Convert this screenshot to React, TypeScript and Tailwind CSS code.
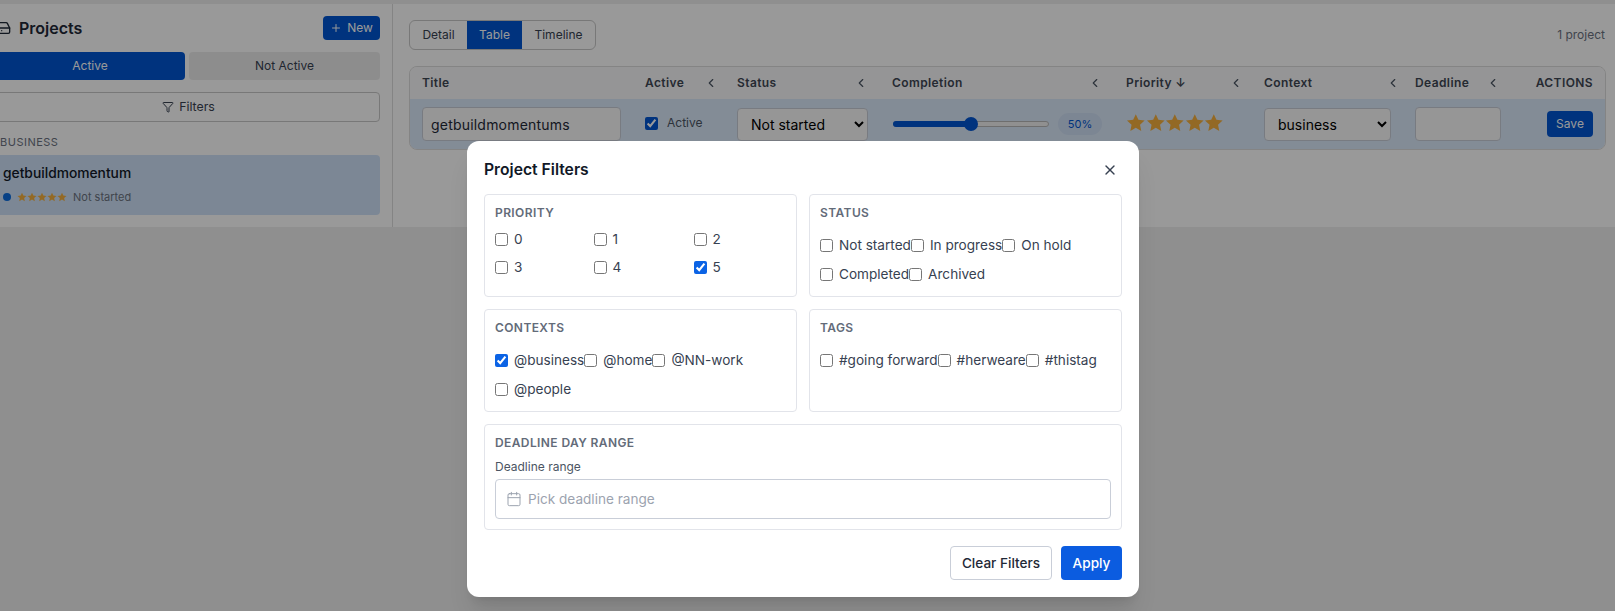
import { Calendar, ChevronLeft, Filter, HardDrive, Plus, X } from "lucide-react";

const COLS = "grid grid-cols-[224px_91px_155px_234px_138px_152px_114px_89px]";

function HeadCell({ label, chevronClass }: { label: string; chevronClass?: string }) {
  return (
    <div className="flex items-center pl-[12px] text-[12px] font-semibold tracking-[0.4px] text-[#3f4754]">
      <span>{label}</span>
      {chevronClass && <ChevronLeft className={`size-[14px] text-[#4b5563] ${chevronClass}`} />}
    </div>
  );
}

function Stars({ size }: { size: string }) {
  return (
    <div className="flex items-center">
      {[0, 1, 2, 3, 4].map((i) => (
        <svg key={i} viewBox="0 0 24 24" className={`${size} fill-[#f5b03e]`}>
          <polygon points="12,1.5 15.2,8.4 22.8,9.3 17.2,14.4 18.7,21.9 12,18.2 5.3,21.9 6.8,14.4 1.2,9.3 8.8,8.4" />
        </svg>
      ))}
    </div>
  );
}

function Check({ label, checked }: { label: string; checked?: boolean }) {
  return (
    <label className="flex h-5 items-center text-[13.6px] text-[#374151]">
      <input type="checkbox" defaultChecked={checked} className="mr-[6px] size-[13px] accent-[#0b63e5]" />
      {label}
    </label>
  );
}

function Section({ title, children, className }: { title: string; children?: React.ReactNode; className?: string }) {
  return (
    <div className={`rounded border border-[#e2e4ea] px-[10px] pt-[10px] ${className ?? ""}`}>
      <div className="text-[12px] font-semibold leading-4 tracking-[0.4px] text-[#636b79]">{title}</div>
      {children}
    </div>
  );
}

function FilterModal() {
  return (
    <div className="absolute left-[467px] top-[141px] w-[672px] rounded-xl bg-white px-[17px] pb-[17px] shadow-xl">
      <div className="flex h-[53px] items-center justify-between pt-[4px]">
        <h2 className="text-[15.7px] font-semibold text-[#111827]">Project Filters</h2>
        <X className="mr-[4px] size-[16px] text-[#374151]" />
      </div>
      <div className="grid grid-cols-2 gap-3">
        <Section title="PRIORITY" className="h-[103px]">
          <div className="mt-[8px] grid grid-cols-[98.5px_100px_1fr] gap-y-2">
            {[0, 1, 2, 3, 4, 5].map((n) => (
              <Check key={n} label={String(n)} checked={n === 5} />
            ))}
          </div>
        </Section>
        <Section title="STATUS" className="h-[103px]">
          <div className="mt-[14px] flex flex-wrap gap-y-[9px]">
            {["Not started", "In progress", "On hold", "Completed", "Archived"].map((s) => (
              <Check key={s} label={s} />
            ))}
          </div>
        </Section>
        <Section title="CONTEXTS" className="h-[103px]">
          <div className="mt-[14px] flex flex-wrap gap-y-[9px]">
            <Check label="@business" checked />
            <Check label="@home" />
            <Check label="@NN-work" />
            <Check label="@people" />
          </div>
        </Section>
        <Section title="TAGS" className="h-[103px]">
          <div className="mt-[14px] flex flex-wrap gap-y-[9px]">
            <Check label="#going forward" />
            <Check label="#herweare" />
            <Check label="#thistag" />
          </div>
        </Section>
      </div>
      <Section title="DEADLINE DAY RANGE" className="mt-3 h-[106px]">
        <div className="mt-[8px] text-[12px] leading-4 text-[#4b5563]">Deadline range</div>
        <div className="mt-[4px] flex h-[40px] items-center gap-[6px] rounded border border-[#c9ced8] px-[10px] text-[13.6px] text-[#9ca3af]">
          <Calendar className="size-[16px]" strokeWidth={1.5} />
          <span>Pick deadline range</span>
        </div>
      </Section>
      <div className="mt-[16px] flex justify-end gap-[9px]">
        <button className="h-[34px] w-[102px] rounded border border-[#c9ced8] bg-white text-[13.6px] font-medium text-[#1f2937]">
          Clear Filters
        </button>
        <button className="h-[34px] w-[61px] rounded bg-[#0b5ce0] text-[13.6px] font-medium text-white">Apply</button>
      </div>
    </div>
  );
}

function Sidebar() {
  return (
    <aside className="w-[393px] shrink-0 border-r border-[#dcdcdc] pl-0 pr-[12px] pt-[12px]">
      <div className="-ml-[5px]">
        <div className="flex h-[24px] items-center justify-between">
          <div className="flex items-center gap-[8px]">
            <HardDrive className="size-[16px] text-[#1f2937]" />
            <span className="text-[16px] font-semibold text-[#1f2937]">Projects</span>
          </div>
          <button className="flex h-[24px] w-[57px] items-center justify-center gap-[5px] rounded bg-[#0056d2] text-[12px] text-white">
            <Plus className="size-[12px]" />
            New
          </button>
        </div>
        <div className="mt-[12px] flex gap-[4px]">
          <div className="flex h-[28px] w-[190px] items-center justify-center rounded bg-[#0056d2] text-[12px] text-white">
            Active
          </div>
          <div className="flex h-[28px] flex-1 items-center justify-center rounded bg-[#ececec] text-[12px] text-[#374151]">
            Not Active
          </div>
        </div>
        <button className="mt-[12px] flex h-[30px] w-full items-center justify-center gap-[5px] rounded border border-[#c9c9c9] pl-[2px] text-[12.3px] text-[#374151]">
          <Filter className="size-[12px]" />
          Filters
        </button>
        <div className="mt-[12px] pl-[5px] text-[11px] leading-4 tracking-[0.5px] text-[#6b7280]">BUSINESS</div>
        <div className="mt-[5px] h-[60px] rounded bg-[#cfe2f8] pl-[8px] pt-[8px]">
          <div className="text-[13.8px] font-medium leading-5 text-[#111827]">getbuildmomentum</div>
          <div className="mt-[6px] flex items-center gap-[6px] text-[11px] leading-4 text-[#6b7280]">
            <span className="size-[8px] rounded-full bg-[#0a6ce0]" />
            <Stars size="size-[10px]" />
            <span>Not started</span>
          </div>
        </div>
      </div>
    </aside>
  );
}

function TableView() {
  return (
    <main className="min-w-0 flex-1 pl-[16px] pr-[10px] pt-[16px]">
      <div className="flex items-center justify-between">
        <div className="flex h-[30px] w-[187px] overflow-hidden rounded-md border border-[#c9c9c9] text-[12px] text-[#374151]">
          <div className="flex w-[57px] items-center justify-center">Detail</div>
          <div className="flex w-[55px] items-center justify-center bg-[#0056d2] text-white">Table</div>
          <div className="flex flex-1 items-center justify-center">Timeline</div>
        </div>
        <span className="text-[12px] text-[#6b7280]">1 project</span>
      </div>
      <div className="mt-[16px] -mr-px overflow-hidden rounded-lg border border-[#dcdcdc]">
        <div className={`${COLS} h-[32px] bg-[#f8f9fa]`}>
          <HeadCell label="Title" />
          <div className="-ml-px flex">
            <HeadCell label="Active" chevronClass="ml-[20px]" />
          </div>
          <HeadCell label="Status" chevronClass="ml-[77px]" />
          <HeadCell label="Completion" chevronClass="ml-[125px]" />
          <HeadCell label="Priority ↓" chevronClass="ml-[43px]" />
          <HeadCell label="Context" chevronClass="ml-[73px]" />
          <div className="-ml-px flex">
            <HeadCell label="Deadline" chevronClass="ml-[17px]" />
          </div>
          <div className="flex items-center justify-end pr-[14px] text-[12px] font-semibold tracking-[0.4px] text-[#3f4754]">
            ACTIONS
          </div>
        </div>
        <div className={`${COLS} h-[50px] bg-[#dbe9fa]`}>
          <div className="pl-[12px] pt-[8px]">
            <div className="flex h-[34px] w-[199px] items-center rounded border border-[#c9ced8] bg-[#fafafa] pl-[8px] text-[14px] tracking-[0.2px] text-[#1f2937]">
              getbuildmomentums
            </div>
          </div>
          <label className="flex items-center pb-[2px] pl-[11px] text-[12px] text-[#4b5563]">
            <input type="checkbox" defaultChecked className="mr-[9px] size-[13px] accent-[#0056d2]" />
            Active
          </label>
          <div className="pl-[12px] pt-[9px]">
            <select className="h-[33px] w-[131px] rounded border border-[#c9ced8] bg-[#fafafa] pl-[9px] text-[14px] text-black">
              <option>Not started</option>
            </select>
          </div>
          <div className="flex items-center pl-[13px]">
            <div className="relative h-[6px] w-[156px] rounded-full border border-[#b8b8b8] bg-[#f0f0f0]">
              <div className="absolute -inset-y-px -left-px w-[78px] rounded-full bg-[#0056d2]" />
              <div className="absolute -top-[5px] left-[70px] size-[14px] rounded-full bg-[#0056d2]" />
            </div>
            <span className="ml-[9px] flex h-[22px] w-[44px] items-center justify-center rounded-full bg-[#cfe0f5] text-[11px] text-[#0056d2]">
              50%
            </span>
          </div>
          <div className="flex items-center pb-[2px] pl-[12px]">
            <Stars size="size-[19.6px]" />
          </div>
          <div className="pl-[12px] pt-[9px]">
            <select className="h-[33px] w-[127px] rounded border border-[#c9ced8] bg-[#fafafa] pl-[9px] text-[14px] text-black">
              <option>business</option>
            </select>
          </div>
          <div className="pl-[11px] pt-[8px]">
            <div className="h-[34px] w-[86px] rounded border border-[#c9ced8] bg-[#fafafa]" />
          </div>
          <div className="flex items-center justify-end pr-[14px]">
            <button className="h-[26px] w-[46px] rounded bg-[#0056d2] text-[12px] text-white">Save</button>
          </div>
        </div>
      </div>
    </main>
  );
}

export default function App() {
  return (
    <div className="relative h-[611px] overflow-hidden bg-[#eeeeee] font-['Inter',sans-serif]">
      <div className="mt-[4px] flex h-[223px] overflow-hidden bg-white">
        <Sidebar />
        <TableView />
      </div>
      <div className="absolute inset-0 bg-black/40" />
      <FilterModal />
    </div>
  );
}
